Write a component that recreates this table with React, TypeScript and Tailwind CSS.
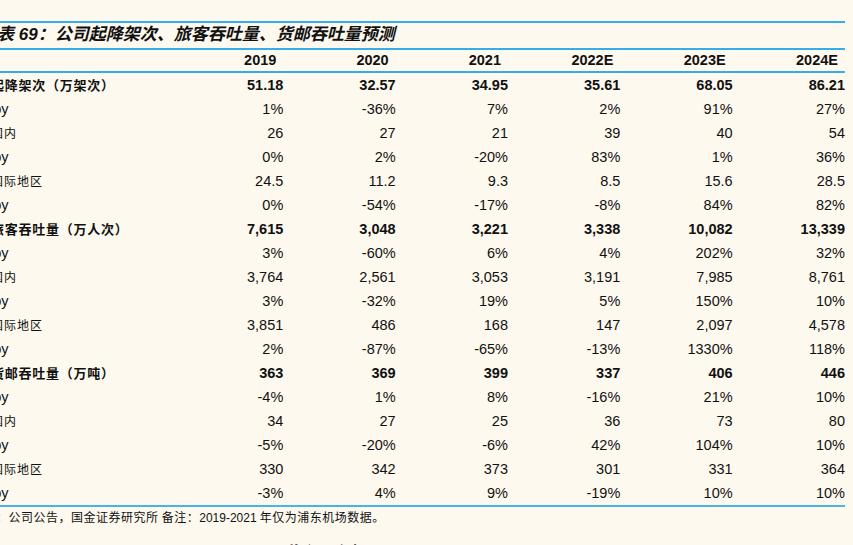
import React from "react";

type Row = { label: string; values: string[]; kind: "bold" | "sub" | "yoy" };

const rows: Row[] = [
  { label: "起降架次（万架次）", values: ["51.18", "32.57", "34.95", "35.61", "68.05", "86.21"], kind: "bold" },
  { label: "yoy", values: ["1%", "-36%", "7%", "2%", "91%", "27%"], kind: "yoy" },
  { label: "国内", values: ["26", "27", "21", "39", "40", "54"], kind: "sub" },
  { label: "yoy", values: ["0%", "2%", "-20%", "83%", "1%", "36%"], kind: "yoy" },
  { label: "国际地区", values: ["24.5", "11.2", "9.3", "8.5", "15.6", "28.5"], kind: "sub" },
  { label: "yoy", values: ["0%", "-54%", "-17%", "-8%", "84%", "82%"], kind: "yoy" },
  { label: "旅客吞吐量（万人次）", values: ["7,615", "3,048", "3,221", "3,338", "10,082", "13,339"], kind: "bold" },
  { label: "yoy", values: ["3%", "-60%", "6%", "4%", "202%", "32%"], kind: "yoy" },
  { label: "国内", values: ["3,764", "2,561", "3,053", "3,191", "7,985", "8,761"], kind: "sub" },
  { label: "yoy", values: ["3%", "-32%", "19%", "5%", "150%", "10%"], kind: "yoy" },
  { label: "国际地区", values: ["3,851", "486", "168", "147", "2,097", "4,578"], kind: "sub" },
  { label: "yoy", values: ["2%", "-87%", "-65%", "-13%", "1330%", "118%"], kind: "yoy" },
  { label: "货邮吞吐量（万吨）", values: ["363", "369", "399", "337", "406", "446"], kind: "bold" },
  { label: "yoy", values: ["-4%", "1%", "8%", "-16%", "21%", "10%"], kind: "yoy" },
  { label: "国内", values: ["34", "27", "25", "36", "73", "80"], kind: "sub" },
  { label: "yoy", values: ["-5%", "-20%", "-6%", "42%", "104%", "10%"], kind: "yoy" },
  { label: "国际地区", values: ["330", "342", "373", "301", "331", "364"], kind: "sub" },
  { label: "yoy", values: ["-3%", "4%", "9%", "-19%", "10%", "10%"], kind: "yoy" },
];

const years = ["2019", "2020", "2021", "2022E", "2023E", "2024E"];

const sans = "font-['Liberation_Sans','Noto_Sans_CJK_SC',sans-serif]";
const cjk = "font-['Noto_Sans_CJK_SC',sans-serif]";

export default function App() {
  return (
    <div className={`w-[853px] h-[545px] overflow-hidden bg-[#fdf9ef] text-[#111] ${sans}`}>
      <div className="w-[848px] pt-[21px] pr-[3px]">
        {/* Title */}
        <div className="h-[29px] border-t-2 border-b-2 border-[#34aee9] flex items-center pb-[5px] whitespace-nowrap overflow-visible">
          <span className={`-ml-[20px] text-[17px] font-bold italic leading-none ${sans}`}>
            图表 69<span className={cjk}>：公司起降架次、旅客吞吐量、货邮吞吐量预测</span>
          </span>
        </div>
        {/* Header */}
        <div className="h-[23px] border-b-2 border-[#34aee9] grid grid-cols-[171px_repeat(6,112.33px)] items-center">
          <div />
          {years.map((y) => (
            <div key={y} className="text-right pr-[7px] text-[14.5px] font-bold leading-none">
              {y}
            </div>
          ))}
        </div>
        {/* Body */}
        <div className="border-b-2 border-[#4ab3e6]">
          {rows.map((r, i) => (
            <div key={i} className="h-[24px] grid grid-cols-[171px_repeat(6,112.33px)] items-center">
              <div className="whitespace-nowrap overflow-visible leading-none">
                {r.kind === "yoy" ? (
                  <span className="-ml-[14px] inline-block text-[14.5px]">yoy</span>
                ) : r.kind === "bold" ? (
                  <span className={`-ml-[9px] inline-block text-[13px] tracking-[0.75px] font-bold ${cjk}`}>
                    {r.label}
                  </span>
                ) : (
                  <span className={`-ml-[9px] inline-block text-[12px] tracking-[1px] ${cjk}`}>
                    {r.label}
                  </span>
                )}
              </div>
              {r.values.map((v, j) => (
                <div
                  key={j}
                  className={`text-right text-[14.5px] leading-none ${r.kind === "bold" ? "font-bold" : ""}`}
                >
                  {v}
                </div>
              ))}
            </div>
          ))}
        </div>
        {/* Footer */}
        <div className="h-[20px] flex items-center whitespace-nowrap">
          <span className={`-ml-[29px] text-[12px] tracking-[0.5px] leading-none ${cjk}`}>
            来源：公司公告，国金证券研究所 备注：<span className={`${sans} tracking-normal`}>2019-2021</span> 年仅为浦东机场数据。
          </span>
        </div>
        <div className="mt-[16px] pl-[255px] whitespace-nowrap">
          <span className={`text-[18px] font-bold leading-none ${sans}`}>
            7.3 <span className={cjk}>收入预测</span>
          </span>
        </div>
      </div>
    </div>
  );
}
